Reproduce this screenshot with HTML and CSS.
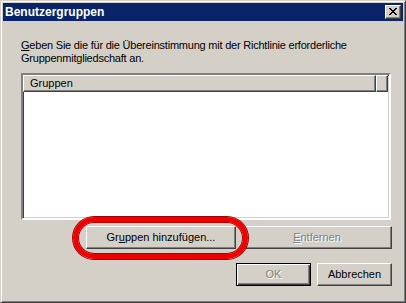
FILE: index.html
```html
<!DOCTYPE html>
<html lang="de">
<head>
<meta charset="UTF-8">
<title>Benutzergruppen</title>
<link rel="stylesheet" href="styles.css">
</head>
<body>
<div class="window">
  <div class="titlebar">
    <span class="title">Benutzergruppen</span>
    <span class="close-btn">
      <svg width="8" height="7" viewBox="0 0 8 7"><path d="M0 0h2v1h-2zM6 0h2v1h-2zM1 1h2v1h-2zM5 1h2v1h-2zM2 2h4v1h-4zM3 3h2v1h-2zM2 4h4v1h-4zM1 5h2v1h-2zM5 5h2v1h-2zM0 6h2v1h-2zM6 6h2v1h-2z" fill="#000"/></svg>
    </span>
  </div>
  <div class="content">
    <p class="intro"><span class="accel">G</span>eben Sie die für die Übereinstimmung mit der Richtlinie erforderliche Gruppenmitgliedschaft an.</p>
    <div class="listbox">
      <div class="list-header">
        <div class="col col-name">Gruppen</div>
        <div class="col col-rest"></div>
      </div>
    </div>
    <div class="button-row">
      <div class="btn btn-wide">Gr<span class="accel">u</span>ppen hinzufügen...</div>
      <div class="btn btn-wide disabled"><span class="accel">E</span>ntfernen</div>
    </div>
    <div class="button-row bottom-row">
      <div class="btn default disabled">OK</div>
      <div class="btn">Abbrechen</div>
    </div>
  </div>
  <div class="highlight"></div>
</div>
</body>
</html>
```

FILE: styles.css
```css
*{
  box-sizing: border-box;
}
body{
  margin: 0;
  padding: 0;
  background-color: #d4d0c8;
  font-family: 'Liberation Sans', Arial, sans-serif;
  font-size: 11px;
  color: #000;
}
.window {
  position: relative;
  width: 406px;
  height: 303px;
  background-color: #d4d0c8;
  border: 1px solid;
  border-color: #d4d0c8 #404040 #404040 #d4d0c8;
  padding: 2px;
  box-shadow: inset 1px 1px #fff, inset -1px -1px #808080;
}
.titlebar {
  height: 18px;
  background-color: #0a246a;
  display: flex;
  align-items: center;
  justify-content: space-between;
  padding: 0 2px 0 2px;
}
.title {
  color: #fff;
  font-weight: bold;
  font-size: 12px;
  line-height: 18px;
}
.close-btn {
  width: 16px;
  height: 14px;
  background-color: #d4d0c8;
  border: 1px solid;
  border-color: #fff #404040 #404040 #fff;
  box-shadow: inset -1px -1px #808080;
  display: flex;
  align-items: center;
  justify-content: center;
  padding: 0 1px 1px 0;
}
.close-btn svg {
  display: block;
}
.content {
  padding: 18px 11px 0 18px;
}
.intro {
  margin: 0;
  line-height: 13px;
  width: 360px;
  letter-spacing: -0.22px;
}
.accel {
  text-decoration: underline;
}
.listbox {
  margin-top: 8px;
  width: 370px;
  height: 147px;
  background-color: #fff;
  border: 2px solid;
  border-color: #808080 #fff #fff #808080;
  box-shadow: inset 1px 1px #404040, inset -1px -1px #d4d0c8;
  padding: 0 1px 1px 0;
}
.list-header {
  display: flex;
  height: 17px;
}
.col {
  background-color: #d4d0c8;
  border: 1px solid;
  border-color: #fff #404040 #404040 #fff;
  box-shadow: inset -1px -1px #808080;
  line-height: 14px;
}
.col-name {
  width: 353px;
  padding-left: 6px;
}
.col-rest {
  flex: 1;
}
.button-row {
  display: flex;
  justify-content: flex-end;
  gap: 6px;
  margin-top: 6px;
}
.bottom-row {
  margin-top: 14px;
}
.btn {
  width: 75px;
  height: 23px;
  background-color: #d4d0c8;
  border: 1px solid;
  border-color: #fff #404040 #404040 #fff;
  box-shadow: inset -1px -1px #808080;
  text-align: center;
  line-height: 20px;
}
.btn-wide {
  width: 150px;
}
.btn.default {
  border: 1px solid #000;
  box-shadow: inset 1px 1px #fff, inset -1px -1px #404040, inset -2px -2px #808080;
}
.disabled {
  color: #808080;
  text-shadow: 1px 1px #fff;
}
.highlight {
  position: absolute;
  left: 72px;
  top: 216px;
  width: 175px;
  height: 42px;
  border: 5px solid #ee0000;
  border-radius: 21px;
  box-shadow: 0 0 0 1px #a00000, inset 0 0 0 1px #b00000;
}
```
